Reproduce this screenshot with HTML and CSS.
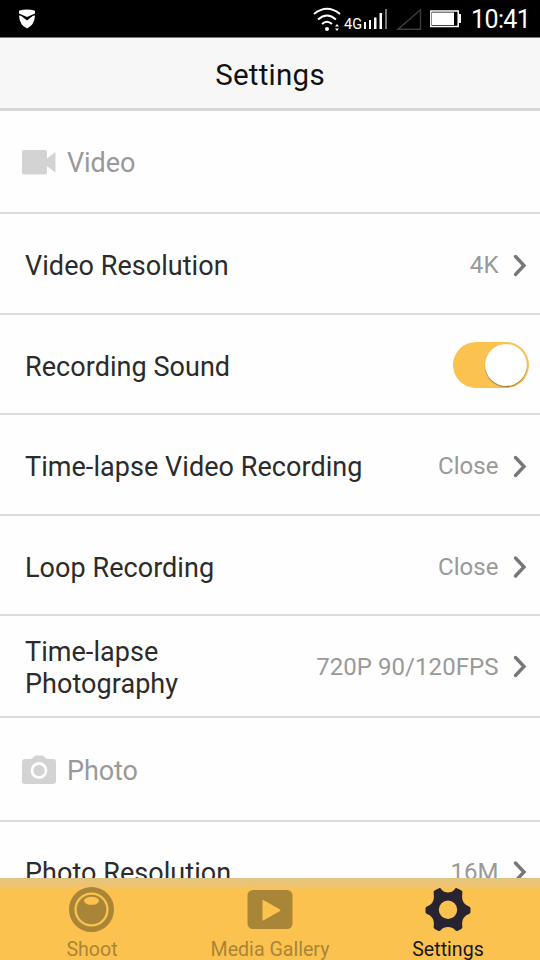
FILE: index.html
```html
<!DOCTYPE html>
<html lang="en">
<head>
<meta charset="utf-8">
<title>Settings</title>
<link rel="stylesheet" href="styles.css">
</head>
<body>
<div class="screen">
  <div class="status">
    <svg class="shield" width="18" height="20" viewBox="0 0 18 20" fill="#fff"><path d="M1 1.8Q9-.8 17 1.8V4.4L9 8 1 4.4Z"/><path d="M1 6.500 3 6.800 9 11.500 15 6.800 17 6.500Q16.500 16 9 19.500Q1.500 16 1 6.500Z"/></svg>
    <svg class="signals" width="150" height="26" viewBox="312 6 150 26">
      <g fill="none" stroke="#fff" stroke-width="2"><path d="M314 14Q327 3.500 340 14"/><path d="M318 19.500Q327 11.500 336 19.500"/><path d="M322 24Q327 19.500 332 24"/></g>
      <circle cx="327" cy="29" r="2" fill="#fff"/>
      <path d="m335 26.500 2-2.500 2 2.500zM335 28.500h4l-2 2.500z" fill="#fff"/>
      <text class="network" x="344" y="28.700">4G</text>
      <g fill="#fff"><path d="M364 22h2v7h-2zM369 20h2v9h-2zM374 17.500h2.500v11.500H374zM379.500 13h2.500v16h-2.500z"/></g>
      <path d="M385 9h2v20h-2z" fill="#777"/>
      <path d="M398 29.300 420.500 9.800V29.300Z" fill="none" stroke="#3d3d3d" stroke-width="1.400"/>
      <path d="M430.800 11h27.400v15.400h-27.400z" fill="none" stroke="#fff" stroke-width="1.500"/><path d="M432 12.500h22v12.500h-22z" fill="#fff"/><path d="M459 14h2v9h-2z" fill="#fff"/>
    </svg>
    <span class="clock">10:41</span>
  </div>
  <header class="header">Settings</header>
  <main class="list">
    <div class="section first">
      <svg width="34" height="26" viewBox="0 0 34 26" fill="#d3d3d3"><rect y="1" width="25" height="24.500" rx="2"/><path d="M25 9.500 33.500 3v20.500L25 17z"/></svg>
      <span>Video</span>
    </div>
    <div class="row r1"><span class="label">Video Resolution</span><span class="value">4K</span><svg class="chevron" width="14" height="24" viewBox="0 0 14 24"><path d="m2.500 3.500 8.500 9-8.500 9"/></svg></div>
    <div class="row r2"><span class="label">Recording Sound</span><span class="toggle"><span class="knob"></span></span></div>
    <div class="row r1"><span class="label">Time-lapse Video Recording</span><span class="value">Close</span><svg class="chevron" width="14" height="24" viewBox="0 0 14 24"><path d="m2.500 3.500 8.500 9-8.500 9"/></svg></div>
    <div class="row r2"><span class="label">Loop Recording</span><span class="value">Close</span><svg class="chevron" width="14" height="24" viewBox="0 0 14 24"><path d="m2.500 3 8.500 9-8.500 9"/></svg></div>
    <div class="row r3"><span class="label">Time-lapse<br>Photography</span><span class="value">720P 90/120FPS</span><svg class="chevron" width="14" height="24" viewBox="0 0 14 24"><path d="m2.500 2.500 8.500 9-8.500 9"/></svg></div>
    <div class="section second">
      <svg width="34" height="30" viewBox="0 0 34 30"><path d="M3 4H8Q10 4 12 1.500Q13 .5 14 .5h6Q21 .5 22 1.500Q24 4 26 4h5q3 0 3 3v19q0 3-3 3H3q-3 0-3-3V7q0-3 3-3z" fill="#d3d3d3"/><circle cx="17" cy="15.500" r="7" fill="none" stroke="#fff" stroke-width="2.800"/></svg>
      <span>Photo</span>
    </div>
    <div class="row r1 last"><span class="label">Photo Resolution</span><span class="value">16M</span><svg class="chevron" width="14" height="24" viewBox="0 0 14 24"><path d="m2.500 3 8.500 9-8.500 9"/></svg></div>
  </main>
  <nav class="tabs">
    <div class="tab">
      <svg width="46" height="46" viewBox="0 0 46 46"><circle cx="22.500" cy="22.500" r="19.800" fill="none" stroke="#a98537" stroke-width="5.400"/><circle cx="22.500" cy="22.500" r="14.800" fill="#a98537"/><ellipse cx="22.500" cy="13.800" rx="7.500" ry="4" fill="#fcc24f"/></svg>
      <span>Shoot</span>
    </div>
    <div class="tab">
      <svg width="46" height="46" viewBox="0 0 46 46"><rect x=".5" y="3" width="45" height="39" rx="5.500" fill="#a98537"/><path d="M15.500 14v18.500q0 1.500 1.300.7L33 24q1-.8 0-1.500L16.800 13.200q-1.300-.7-1.300.8z" fill="#fcc24f"/></svg>
      <span>Media Gallery</span>
    </div>
    <div class="tab active">
      <svg width="46" height="46" viewBox="0 0 46 46"><path fill="#272430" fill-rule="evenodd" d="M9.500 3.500 14 1.200Q15.500.8 16.500 2.500Q18.500 5.500 23 5.500Q27.500 5.500 29.500 2.500Q30.500.8 32 1.200L36.500 3.500Q38 4.500 37.300 6.500Q36.500 13 39 16Q41 18.500 44 19.500Q45.500 20 45.500 21.500v3.500Q45.500 26.500 44 27Q41 27.800 39 30.500Q36.500 34 37.300 39Q37.800 41 36.300 42L32.500 44Q31 44.500 29.800 42.700Q27.500 40 23 40Q18.500 40 16.200 42.700Q15 44.500 13.500 44L9.700 42Q8.200 41 8.700 39Q9.500 34 7 30.500Q5 27.800 2 27Q.5 26.500 .5 25V21.500Q.5 20 2 19.500Q5 18.500 7 16Q9.500 13 8.700 6.500Q8 4.500 9.500 3.500ZM23 13.500A9.200 9.200 0 1 0 23 31.900A9.200 9.200 0 1 0 23 13.500Z"/></svg>
      <span>Settings</span>
    </div>
  </nav>
</div>
</body>
</html>
```
FILE: styles.css
```css
* { box-sizing: border-box; }
body { margin: 0; font-family: Roboto, sans-serif; background: #fefefe; }
svg { display: block; flex: none; }
.screen { width: 540px; height: 960px; display: flex; flex-direction: column; overflow: hidden; }
.status { height: 38px; flex: none; background: #000; border-bottom: 1px solid #777; display: flex; align-items: flex-start; color: #fff; }
.shield { margin: 9px 0 0 18px; }
.signals { margin: 6px 0 0 276px; }
.network { font-size: 14.5px; fill: #fff; }
.clock { margin: 5px 0 0 9px; font-size: 25px; line-height: 30px; letter-spacing: -.6px; white-space: nowrap; }
.header { height: 73px; flex: none; background: #f7f7f7; border-bottom: 3px solid #d6d6d6; text-align: center; font-size: 29.5px; line-height: 75px; letter-spacing: .25px; color: #111; }
.list { height: 767px; flex: none; overflow: hidden; }
.section { display: flex; align-items: center; gap: 11px; padding: 1px 0 0 22px; border-bottom: 2px solid #dbdbdb; color: #999; font-size: 27px; letter-spacing: -.1px; }
.section span { padding-top: 2px; }
.first { height: 103px; }
.second { height: 104px; }
.row { display: flex; align-items: center; padding: 3px 13px 0 25px; border-bottom: 2px solid #dbdbdb; }
.r1 { height: 101px; }
.r2 { height: 100px; }
.r3 { height: 102px; padding-top: 2px; }
.last { padding-top: 1px; }
.label { flex: 1; padding-top: 2px; font-size: 27px; line-height: 32px; letter-spacing: .05px; color: #2b2b2b; white-space: nowrap; }
.r3 .label { padding-top: 1px; }
.value { font-size: 24px; letter-spacing: .05px; color: #999; white-space: nowrap; }
.chevron { margin-left: 14.5px; fill: none; stroke: #777; stroke-width: 3.4; stroke-linecap: round; }
.toggle { width: 76px; height: 46px; margin-right: -2px; padding: 2px; border-radius: 23px; background: #fcc24f; display: flex; justify-content: flex-end; position: relative; top: -1px; }
.knob { width: 42px; height: 42px; border-radius: 50%; background: #fff; box-shadow: 0 1px 1px #98732c; }
.tabs { height: 82px; flex: none; display: flex; padding: 9px 3px 0; background: linear-gradient(#dcc38b 0, #e8c47b 2px, #eec370 8px, #fcc24f 12px); }
.tab { flex: 1; display: flex; flex-direction: column; align-items: center; color: #a98537; font-size: 19.6px; line-height: 24px; white-space: nowrap; }
.tab span { margin-top: 5px; }
.active { color: #19161a; }
```
